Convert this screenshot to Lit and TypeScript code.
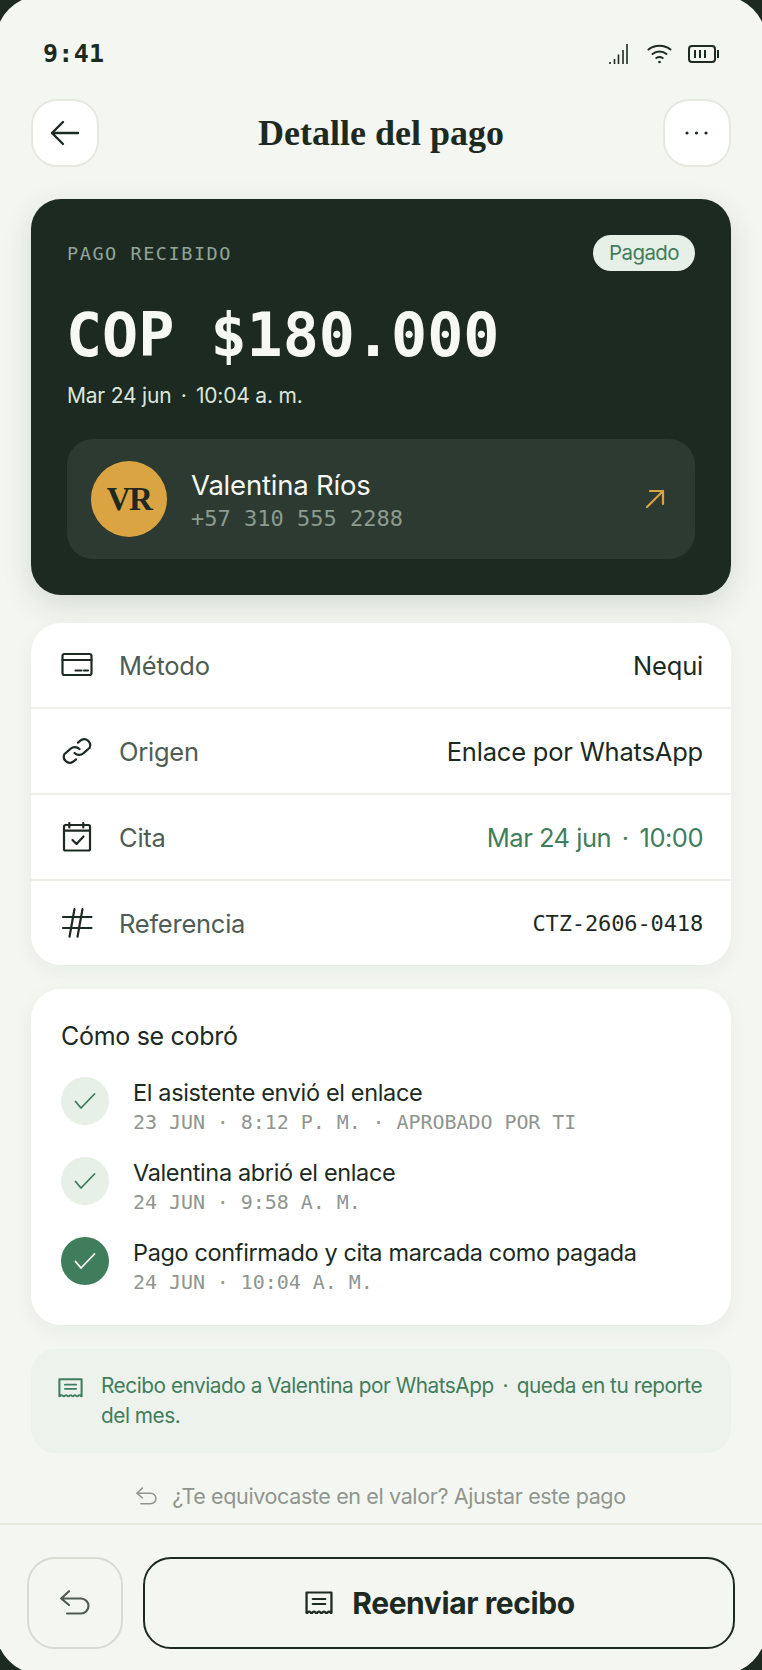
import { LitElement, html, css, svg } from 'lit'
import { customElement } from 'lit/decorators.js'

const receiptPath = svg`<path d="M1.500 1.500h24v20.500c-1.300 0-1.100-1.500-2.400-1.500s-1.100 1.500-2.400 1.500-1.100-1.500-2.400-1.500-1.100 1.500-2.400 1.500-1.100-1.500-2.400-1.500-1.100 1.500-2.400 1.500-1.100-1.500-2.400-1.500-1.100 1.500-2.400 1.500-1.100-1.500-2.400-1.500-1.100 1.500-2.400 1.500z" fill="none" stroke="currentColor" stroke-width="2.200" stroke-linejoin="round"/><path d="M7.500 8h12M7.500 13h12" stroke="currentColor" stroke-width="2.200" stroke-linecap="round"/>`
const undoPath = svg`<path d="M9 1.200 1.200 8.500 9 15M1.200 8.500H21a7.500 7.500 0 0 1 0 15H7" fill="none" stroke="currentColor" stroke-width="2.200" stroke-linecap="round" stroke-linejoin="round"/>`
const check = svg`<path d="M3.500 12.500l5.500 6.500L22.500 5" fill="none" stroke="currentColor" stroke-width="1.800" stroke-linecap="round" stroke-linejoin="round"/>`

// wide gap around the middle dot: normal space plus thin space
const DOT = ' \u2009·\u2009 '

const steps = [
  { title: 'El asistente envió el enlace', meta: '23 JUN · 8:12 P. M. · APROBADO POR TI', done: false },
  { title: 'Valentina abrió el enlace', meta: '24 JUN · 9:58 A. M.', done: false },
  { title: 'Pago confirmado y cita marcada como pagada', meta: '24 JUN · 10:04 A. M.', done: true },
]

@customElement('app-root')
export class AppRoot extends LitElement {
  static styles = css`
    :host {
      display: block;
      width: 762px;
      height: 1670px;
      overflow: hidden;
      background: #1c2a22;
      font-family: "Inter", "Liberation Sans", sans-serif;
      color: #1c2a22;
    }

    /* the phone screen is a bit larger than the shot, so only part of each corner shows */
    .screen {
      width: 772px;
      height: 1680px;
      margin: -5px;
      padding: 5px;
      box-sizing: border-box;
      background: #f4f7f1;
      border-radius: 48px;
      display: flex;
      flex-direction: column;
      overflow: hidden;
    }

    .mono { font-family: "DejaVu Sans Mono", "Liberation Mono", monospace; }
    .serif { font-family: "Liberation Serif", serif; }

    .status {
      height: 99px;
      box-sizing: border-box;
      padding: 37px 43px 0 43px;
      display: flex;
      justify-content: space-between;
      align-items: flex-start;
      flex: none;
    }

    .time {
      font-size: 25px;
      line-height: 34px;
      font-weight: 700;
      letter-spacing: 0.3px;
    }

    .status-icons { display: flex; align-items: center; margin-top: 6px; }
    .status-icons .signal { margin-right: 19px; }
    .status-icons .wifi { margin-right: 16px; }
    svg { display: block; flex: none; }

    .nav {
      flex: none;
      display: flex;
      align-items: center;
      justify-content: space-between;
      padding: 0 31px;
      height: 68px;
    }

    .nav-btn {
      width: 68px;
      height: 68px;
      box-sizing: border-box;
      border-radius: 26px;
      background: #fff;
      border: 2px solid #e7e9e0;
      display: flex;
      align-items: center;
      justify-content: center;
    }

    .nav h1 {
      margin: 0;
      font-size: 36px;
      line-height: 48px;
      font-weight: 700;
    }

    .content {
      flex: 1;
      display: flex;
      flex-direction: column;
      padding: 32px 31px 0;
    }

    .hero {
      height: 396px;
      box-sizing: border-box;
      background: #1c2a22;
      border-radius: 30px;
      padding: 36px;
      box-shadow: 0 10px 30px rgba(28, 42, 34, 0.14);
      color: #f4f7f1;
    }

    .hero-top {
      display: flex;
      justify-content: space-between;
      align-items: center;
      height: 36px;
    }

    .eyebrow {
      font-size: 18.500px;
      letter-spacing: 1.550px;
      color: #93a597;
    }

    .badge {
      height: 36px;
      box-sizing: border-box;
      padding: 0 16px;
      border-radius: 18px;
      background: #e6f0e6;
      color: #3f7d5c;
      font-size: 20.500px;
      letter-spacing: -0.600px;
      line-height: 36px;
    }

    .amount {
      font-size: 60px;
      line-height: 72px;
      font-weight: 700;
      margin: 28px 0 0 -1px;
      color: #f6f8f3;
      white-space: nowrap;
    }

    .when {
      font-size: 21px;
      letter-spacing: -0.200px;
      line-height: 30px;
      margin-top: 10px;
      color: #dce6da;
    }

    .client {
      margin-top: 28px;
      height: 120px;
      box-sizing: border-box;
      background: #2d3a32;
      border-radius: 26px;
      padding: 0 30px 0 24px;
      display: flex;
      align-items: center;
      gap: 24px;
    }

    .avatar {
      width: 76px;
      height: 76px;
      border-radius: 50%;
      background: #d9a441;
      color: #1c2a22;
      display: flex;
      align-items: center;
      justify-content: center;
      font-size: 33px;
      letter-spacing: -1.500px;
      font-weight: 700;
      flex: none;
    }

    .client-info { flex: 1; padding-top: 2px; }
    .client-name { font-size: 27.500px; letter-spacing: -0.200px; line-height: 36px; color: #f6f8f3; }
    .client-phone { font-size: 22px; line-height: 30px; color: #8b9c8f; margin-top: 1px; }

    .card {
      background: #fff;
      border-radius: 30px;
      box-shadow: 0 6px 20px rgba(28, 42, 34, 0.05);
    }

    .details { margin-top: 28px; height: 342px; display: flex; flex-direction: column; }

    .row {
      flex: 1;
      display: flex;
      align-items: center;
      padding: 0 28px 0 30px;
      border-bottom: 2px solid #eeefe8;
    }
    .row:last-child { border-bottom: none; }

    .row-icon { width: 32px; height: 32px; margin-right: 26px; color: #1c2a22; }
    .row-label { flex: 1; font-size: 25.500px; letter-spacing: -0.250px; color: #4f5c54; }
    .row-value { font-size: 25.500px; letter-spacing: -0.200px; color: #1c2a22; }
    .row-value.green { color: #3f7d5c; letter-spacing: -0.500px; }
    .row-value.mono { font-size: 22px; letter-spacing: -0.130px; }

    .timeline { margin-top: 24px; height: 336px; box-sizing: border-box; padding: 31px 30px 0; }
    .timeline h2 { margin: 0 0 23px; font-size: 25px; letter-spacing: -0.300px; line-height: 32px; font-weight: 400; }

    .steps { display: flex; flex-direction: column; gap: 20px; }
    .step { display: flex; gap: 24px; height: 60px; align-items: flex-start; }

    .dot {
      width: 48px;
      height: 48px;
      border-radius: 50%;
      background: #e6f0e6;
      color: #3f7d5c;
      display: flex;
      align-items: center;
      justify-content: center;
      flex: none;
      margin-top: 2px;
    }
    .dot.done { background: #3f7d5c; color: #fff; }

    .step-title { font-size: 23.500px; letter-spacing: -0.360px; line-height: 30px; margin-top: 3px; white-space: nowrap; }
    .step-meta { font-size: 20px; letter-spacing: -0.060px; line-height: 28px; color: #8f958f; white-space: nowrap; }

    .note {
      margin-top: 24px;
      height: 104px;
      box-sizing: border-box;
      background: #eef2ed;
      border-radius: 24px;
      padding: 22px 20px 0 27px;
      display: flex;
      gap: 18px;
      color: #3f7d5c;
      font-size: 20.800px;
      letter-spacing: -0.470px;
      line-height: 30px;
    }
    .note svg { margin-top: 7px; }

    .adjust {
      margin-top: 28px;
      height: 30px;
      display: flex;
      align-items: center;
      justify-content: center;
      gap: 15px;
      font-size: 21.500px;
      letter-spacing: -0.370px;
      color: #90958f;
    }

    .footer {
      flex: none;
      height: 147px;
      box-sizing: border-box;
      border-top: 2px solid #e7e9e0;
      padding: 32px 27px 0 27px;
      display: flex;
      gap: 20px;
    }

    .undo-btn {
      width: 96px;
      height: 92px;
      box-sizing: border-box;
      border-radius: 28px;
      border: 2px solid #d9dbd3;
      padding-bottom: 2px;
      display: flex;
      align-items: center;
      justify-content: center;
      color: #4f5c54;
      flex: none;
    }

    .main-btn {
      flex: 1;
      height: 92px;
      box-sizing: border-box;
      border-radius: 28px;
      border: 2px solid #1c2a22;
      padding-left: 2px;
      display: flex;
      align-items: center;
      justify-content: center;
      gap: 19px;
      font-size: 30px;
      letter-spacing: -0.400px;
      font-weight: 700;
    }
  `

  render() {
    return html`
      <div class="screen">
        <div class="status">
          <span class="time mono">9:41</span>
          <div class="status-icons">
            <svg class="signal" width="19" height="21" viewBox="0 0 19 21" stroke="currentColor" stroke-width="1.600">
              <path d="M1 19v2M5.500 16v5M9.500 11.500V21M14 7v14M18 1v20" />
            </svg>
            <svg class="wifi" width="25" height="20" viewBox="0 0 25 20" fill="none" stroke="currentColor" stroke-width="2" stroke-linecap="round">
              <path d="M1.500 5.500C7.500 0.500 17.500 0.500 23.500 5.500M5.500 10C9.500 6.800 15.500 6.800 19.500 10M9.300 14c2-1.200 4.400-1.200 6.400 0" />
              <circle cx="12.500" cy="18" r="1.300" fill="currentColor" stroke="none" />
            </svg>
            <svg width="31" height="18" viewBox="0 0 31 18" fill="none" stroke="currentColor">
              <rect x="1" y="1" width="26" height="16" rx="3" stroke-width="2" />
              <path d="M7 5v8M12 5v8M17 5v8M30 5v8" stroke-width="2" />
            </svg>
          </div>
        </div>

        <div class="nav">
          <div class="nav-btn">
            <svg width="30" height="26" viewBox="0 0 30 26" fill="none" stroke="currentColor" stroke-width="2.400" stroke-linecap="round" stroke-linejoin="round">
              <path d="M13 2 2 13l11 11M2 13h26" />
            </svg>
          </div>
          <h1 class="serif">Detalle del pago</h1>
          <div class="nav-btn">
            <svg width="23" height="4" viewBox="0 0 23 4" fill="currentColor">
              <circle cx="2" cy="2" r="1.600" /><circle cx="11.500" cy="2" r="1.600" /><circle cx="21" cy="2" r="1.600" />
            </svg>
          </div>
        </div>

        <div class="content">
          <section class="hero">
            <div class="hero-top">
              <span class="eyebrow mono">PAGO RECIBIDO</span>
              <span class="badge">Pagado</span>
            </div>
            <div class="amount mono">COP $180.000</div>
            <div class="when">Mar 24 jun${DOT}10:04 a. m.</div>
            <div class="client">
              <div class="avatar serif">VR</div>
              <div class="client-info">
                <div class="client-name">Valentina Ríos</div>
                <div class="client-phone mono">+57 310 555 2288</div>
              </div>
              <svg width="20" height="20" viewBox="0 0 20 20" fill="none" stroke="#d9a441" stroke-width="2.200" stroke-linecap="round" stroke-linejoin="round">
                <path d="M2 18 18 2M5 2h13v13" />
              </svg>
            </div>
          </section>

          <section class="card details">
            <div class="row">
              <svg class="row-icon" viewBox="0 0 32 32" fill="none" stroke="currentColor" stroke-width="2.200" stroke-linecap="round" stroke-linejoin="round">
                <rect x="1.500" y="5" width="29" height="21" rx="2" />
                <path d="M1.500 11h29M14.500 21.500h6M23 21.500h4" />
              </svg>
              <span class="row-label">Método</span>
              <span class="row-value">Nequi</span>
            </div>
            <div class="row">
              <svg class="row-icon" viewBox="0 0 32 32" fill="none" stroke="currentColor" stroke-width="2.200" stroke-linecap="round" stroke-linejoin="round">
                <path d="M13.500 18c2.600 2.600 6.500 2.500 9 .2l6-5.200a6 6 0 0 0-8.500-7.800l-3 2.500" />
                <path d="M18.500 14c-2.600-2.600-6.500-2.500-9-.2l-6 5.200a6 6 0 0 0 8.500 7.800l3-2.500" />
              </svg>
              <span class="row-label">Origen</span>
              <span class="row-value">Enlace por WhatsApp</span>
            </div>
            <div class="row">
              <svg class="row-icon" viewBox="0 0 32 32" fill="none" stroke="currentColor" stroke-width="2.200" stroke-linecap="round" stroke-linejoin="round">
                <rect x="3" y="4" width="26" height="25.500" rx="1.500" />
                <path d="M3 9.700h26M8.300 2v4.500M22.300 2v4.500M11.500 19l4 4 7-7.500" />
              </svg>
              <span class="row-label">Cita</span>
              <span class="row-value green">Mar 24 jun${DOT}10:00</span>
            </div>
            <div class="row">
              <svg class="row-icon" viewBox="0 0 32 32" fill="none" stroke="currentColor" stroke-width="2.200" stroke-linecap="round" stroke-linejoin="round">
                <path d="M2 10h28.500M2 21h28.500M13.500 2 8.500 29.700M21.500 2l-5 27.700" />
              </svg>
              <span class="row-label">Referencia</span>
              <span class="row-value mono">CTZ-2606-0418</span>
            </div>
          </section>

          <section class="card timeline">
            <h2>Cómo se cobró</h2>
            <div class="steps">
              ${steps.map(
                (s) => html`
                  <div class="step">
                    <div class="dot ${s.done ? 'done' : ''}">
                      <svg width="26" height="24" viewBox="0 0 26 24">${check}</svg>
                    </div>
                    <div>
                      <div class="step-title">${s.title}</div>
                      <div class="step-meta mono">${s.meta}</div>
                    </div>
                  </div>
                `
              )}
            </div>
          </section>

          <section class="note">
            <svg width="25" height="20" viewBox="0 0 27 24" preserveAspectRatio="none">${receiptPath}</svg>
            <span>Recibo enviado a Valentina por WhatsApp${DOT}queda en tu reporte del mes.</span>
          </section>

          <div class="adjust">
            <svg width="21" height="18" viewBox="0 0 30 25">${undoPath}</svg>
            <span>¿Te equivocaste en el valor? Ajustar este pago</span>
          </div>
        </div>

        <div class="footer">
          <div class="undo-btn">
            <svg width="30" height="25" viewBox="0 0 30 25">${undoPath}</svg>
          </div>
          <div class="main-btn">
            <svg width="28" height="24" viewBox="0 0 27 24" preserveAspectRatio="none">${receiptPath}</svg>
            <span>Reenviar recibo</span>
          </div>
        </div>
      </div>
    `
  }
}

declare global {
  interface HTMLElementTagNameMap {
    'app-root': AppRoot
  }
}
